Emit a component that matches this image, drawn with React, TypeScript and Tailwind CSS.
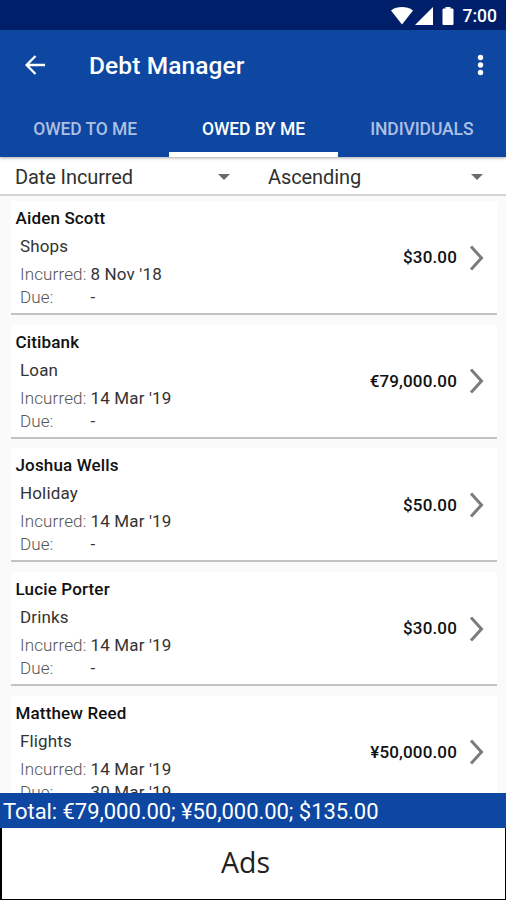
import React, { useState } from 'react';

interface Debt {
  name: string;
  category: string;
  incurred: string;
  due: string;
  amount: string;
}

const debts: Debt[] = [
  { name: 'Aiden Scott', category: 'Shops', incurred: "8 Nov '18", due: '-', amount: '$30.00' },
  { name: 'Citibank', category: 'Loan', incurred: "14 Mar '19", due: '-', amount: '€79,000.00' },
  { name: 'Joshua Wells', category: 'Holiday', incurred: "14 Mar '19", due: '-', amount: '$50.00' },
  { name: 'Lucie Porter', category: 'Drinks', incurred: "14 Mar '19", due: '-', amount: '$30.00' },
  { name: 'Matthew Reed', category: 'Flights', incurred: "14 Mar '19", due: "30 Mar '19", amount: '¥50,000.00' },
];

const tabs = ['OWED TO ME', 'OWED BY ME', 'INDIVIDUALS'];

const StatusBar: React.FC = () => (
  <div className="flex h-[30px] shrink-0 items-center justify-end bg-[#001f6b] pr-[9px] text-white">
    {/* Wifi, signal and battery */}
    <svg className="mt-px h-[18px] w-[64px]" viewBox="0 0 64 18" fill="currentColor">
      <path d="M0 3.400C6.500-1 15.500-1 22 3.400L11 17.500z" />
      <path d="M42 0v18H24z" />
      <path d="M54.500 0h5v1.500h1.700c.8 0 1.300.6 1.300 1.300v13.900c0 .8-.5 1.300-1.300 1.300h-8.400c-.8 0-1.300-.5-1.300-1.300V2.800c0-.7.500-1.300 1.300-1.300h1.700z" />
    </svg>
    <span className="ml-2 pt-px text-[17.500px] font-medium leading-[30px]">7:00</span>
  </div>
);

const AppBar: React.FC = () => (
  <div className="flex h-[71px] shrink-0 items-center pb-0.5 pl-[25px] pr-[22.500px] text-white">
    <button aria-label="Back">
      <svg className="h-5 w-5" viewBox="0 0 20 20" fill="none" stroke="currentColor" strokeWidth={2.3}>
        <path d="M20 10H2M10.500 1L1.600 10l8.900 9" />
      </svg>
    </button>
    <h1 className="ml-11 flex-1 pt-0.5 text-[24.500px] font-medium leading-8 tracking-[0.1px]">Debt Manager</h1>
    <button aria-label="More options">
      <svg className="h-[22px] w-2" viewBox="0 0 8 22" fill="currentColor">
        <circle cx="4.500" cy="3.500" r="2.700" />
        <circle cx="4.500" cy="11" r="2.700" />
        <circle cx="4.500" cy="18.500" r="2.700" />
      </svg>
    </button>
  </div>
);

const SortSelect: React.FC<{ label: string }> = ({ label }) => (
  <button className="flex h-full flex-1 items-center justify-between pl-[15px] pr-[23px] pt-0.5 text-[20px] tracking-[-0.1px] text-[#303030]">
    <span>{label}</span>
    <svg className="h-1.5 w-3" viewBox="0 0 12 6" fill="#6b6b6b">
      <path d="M0 0h12L6 6z" />
    </svg>
  </button>
);

const DebtCard: React.FC<{ debt: Debt }> = ({ debt }) => (
  <div className="flex h-[114px] shrink-0 items-center justify-between border-b-2 border-[#c2c2c2] bg-white pl-[4.500px] pr-[13px]">
    <div className="self-start pt-[3px] text-[17px] tracking-[0.15px] text-[#333]">
      <div className="h-7 font-medium leading-7 text-[#111]">{debt.name}</div>
      <div className="h-7 pl-[4.500px] leading-7">{debt.category}</div>
      <div className="flex h-[26px] pl-[4.500px] leading-7">
        <span className="w-[70.500px] font-light text-[#555]">Incurred:</span>
        <span>{debt.incurred}</span>
      </div>
      <div className="flex h-[22px] pl-[4.500px] leading-[22px]">
        <span className="w-[70.500px] font-light text-[#555]">Due:</span>
        <span>{debt.due}</span>
      </div>
    </div>
    <div className="flex items-center pt-0.5 text-[17px] font-medium tracking-[0.15px] text-[#111]">
      <span>{debt.amount}</span>
      <svg className="mb-px ml-3 h-[26px] w-[15px]" viewBox="0 0 15 26" fill="none" stroke="#7b7b7b" strokeWidth={3}>
        <path d="M2 1.500L12.500 13 2 24.500" />
      </svg>
    </div>
  </div>
);

const App: React.FC = () => {
  const [activeTab, setActiveTab] = useState('OWED BY ME');

  return (
    <div className="flex h-[900px] w-[506px] flex-col overflow-hidden bg-[#fafafa] font-['Roboto',sans-serif]">
      <StatusBar />
      <header className="z-10 flex h-[127px] shrink-0 flex-col bg-[#0d47a1] shadow-[0_1px_3px_rgba(0,0,0,0.35)]">
        <AppBar />
        <nav className="grid h-14 grid-cols-3 pl-px">
          {tabs.map((tab) => (
            <button
              key={tab}
              onClick={() => setActiveTab(tab)}
              className={
                tab === activeTab
                  ? 'border-b-[5px] border-white pt-[5px] text-[17.500px] font-medium tracking-[-0.1px] text-white'
                  : 'border-b-[5px] border-transparent pt-[5px] text-[17.500px] font-medium tracking-[-0.1px] text-[#aebfe4]'
              }
            >
              {tab}
            </button>
          ))}
        </nav>
      </header>

      <div className="flex h-[39px] shrink-0 border-b-2 border-[#d4d4d4] bg-white">
        <SortSelect label="Date Incurred" />
        <SortSelect label="Ascending" />
      </div>

      <main className="flex min-h-0 flex-1 flex-col gap-[9.700px] overflow-hidden pl-[11px] pr-[9px] pt-[5px]">
        {debts.map((debt) => (
          <DebtCard key={debt.name} debt={debt} />
        ))}
      </main>

      <div className="h-[35px] shrink-0 bg-[#0d47a1] pl-[3px] text-[22px] leading-[37px] tracking-[-0.05px] text-white">
        Total: €79,000.00; ¥50,000.00; $135.00
      </div>
      <div className="flex h-[72px] shrink-0 items-center justify-center border border-t-0 border-l-2 border-black bg-white pb-[3px] pr-4 font-['Open_Sans',sans-serif] text-[28.500px] text-[#222]">
        Ads
      </div>
    </div>
  );
};

export default App;
